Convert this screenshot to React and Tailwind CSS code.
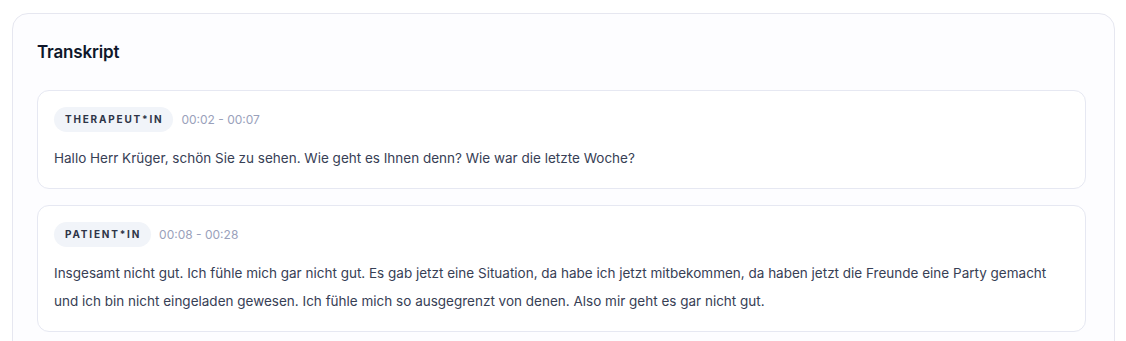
export default function App() {
  const items = [
    {
      speaker: "Therapeut*in",
      time: "00:02 - 00:07",
      text: "Hallo Herr Krüger, schön Sie zu sehen. Wie geht es Ihnen denn? Wie war die letzte Woche?",
    },
    {
      speaker: "Patient*in",
      time: "00:08 - 00:28",
      text: "Insgesamt nicht gut. Ich fühle mich gar nicht gut. Es gab jetzt eine Situation, da habe ich jetzt mitbekommen, da haben jetzt die Freunde eine Party gemacht und ich bin nicht eingeladen gewesen. Ich fühle mich so ausgegrenzt von denen. Also mir geht es gar nicht gut.",
    },
  ];
  return (
    <div className="bg-white min-h-[341px] pl-3 pr-[11px] pt-[13px] font-['Inter',sans-serif]">
      <div className="rounded-2xl border border-[#e6e7f0] bg-[#fdfdff] pl-6 pr-7 pt-6 pb-6">
        <h2 className="text-[17px] leading-7 font-semibold text-[#0f172a] tracking-[-0.01em]">Transkript</h2>
        <div className="mt-6 flex flex-col gap-4">
          {items.map((it, i) => (
            <div key={i} className="rounded-xl border border-[#e6e8f2] bg-white px-4 pt-4 pb-4">
              <div className="flex items-center gap-2">
                <span className="rounded-full bg-[#f1f4f9] pl-[11px] pr-[10px] h-[25px] flex items-center text-[10px] font-bold uppercase tracking-[0.18em] text-[#2e3447]">
                  {it.speaker}
                </span>
                <span className="text-xs text-[#9aa1bb]">{it.time}</span>
              </div>
              <p className="mt-3 text-[13.5px] leading-7 text-[#374055]">{it.text}</p>
            </div>
          ))}
        </div>
      </div>
    </div>
  );
}
